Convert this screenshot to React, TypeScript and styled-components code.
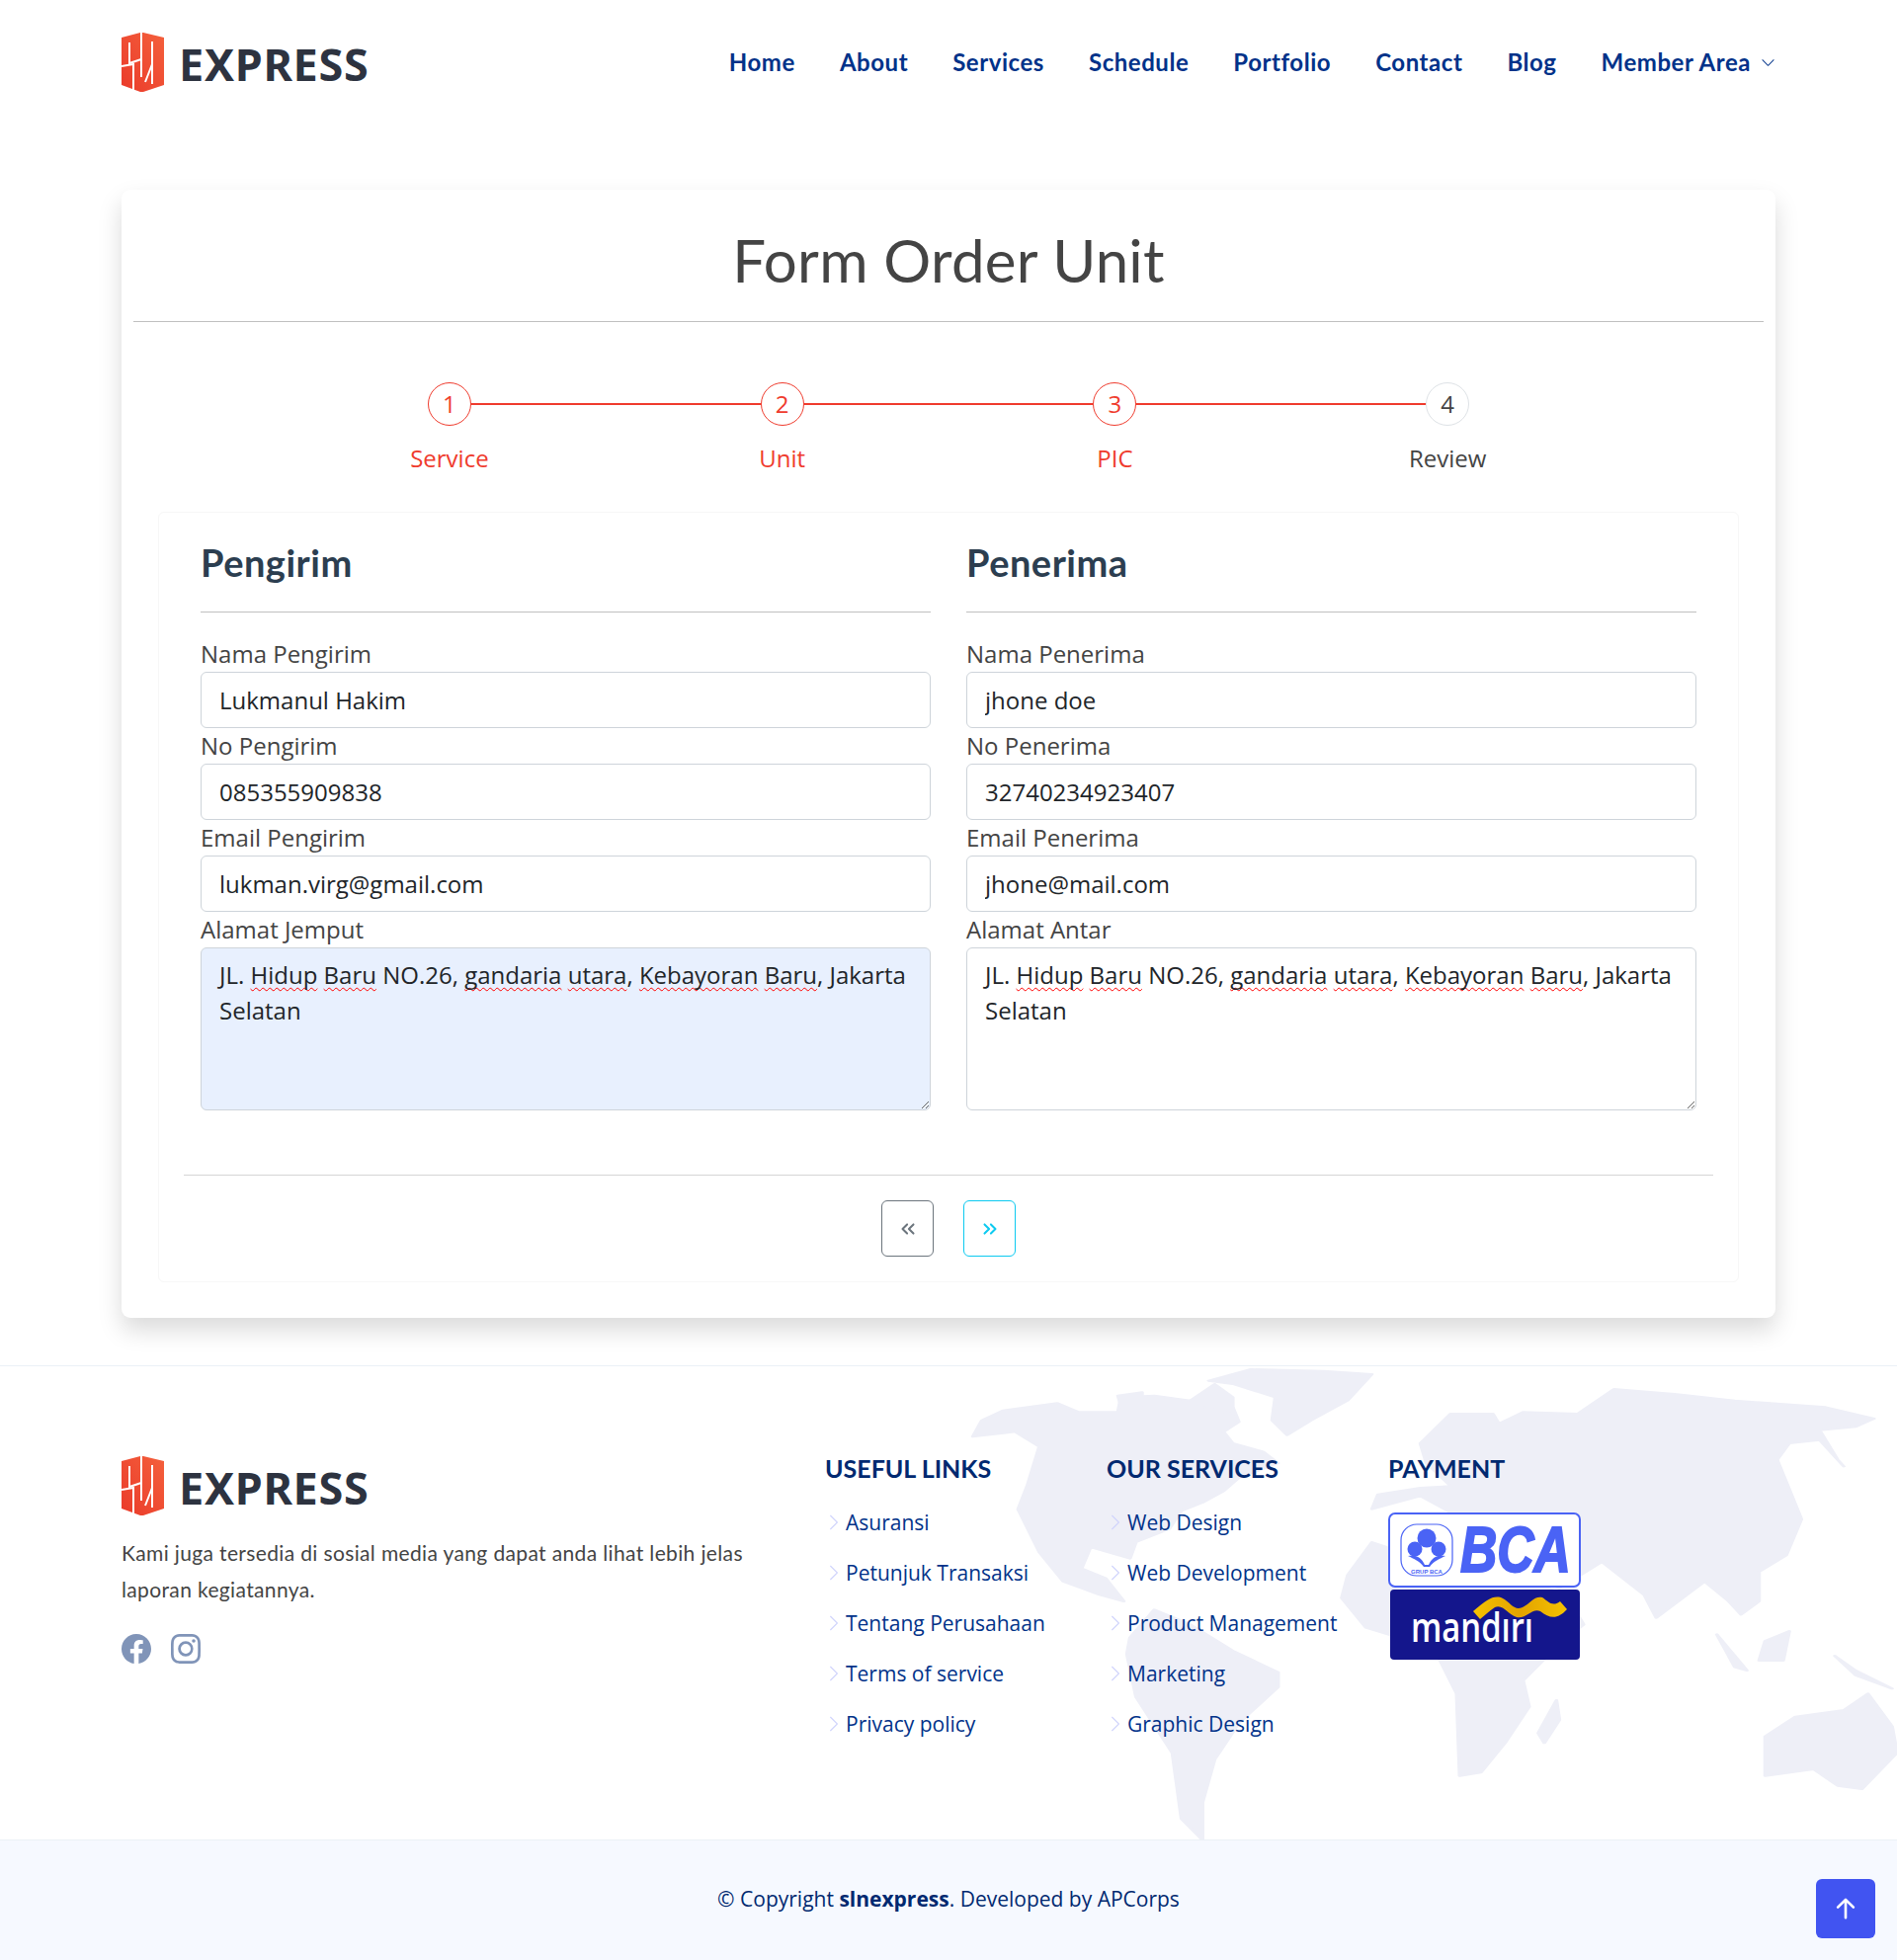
import styled, { createGlobalStyle } from "styled-components";
import { BsArrowUpShort, BsChevronDown, BsChevronRight, BsFacebook, BsInstagram } from "react-icons/bs";
import { ChevronsLeft, ChevronsRight } from "lucide-react";

const heading = `Lato, "Noto Sans", sans-serif`;
const red = "#ef3b2d";
const navy = "#012970";
const linkBlue = "#013289";

const GlobalStyle = createGlobalStyle`
  * { box-sizing: border-box; }
  body {
    margin: 0;
    background: #fff;
    color: #444;
    font-family: "Open Sans", sans-serif;
    font-size: 24px;
  }
`;

const LogoMark = () => (
  <svg width="43" height="60" viewBox="0 0 43 60">
    <defs>
      <linearGradient id="mark" x1="0" y1="1" x2="1" y2="0">
        <stop offset="0" stopColor="#ea3a2a" />
        <stop offset="1" stopColor="#f4603c" />
      </linearGradient>
    </defs>
    <polygon points="0,5 19,0 22,0 43,5 43,53 22,60 19,60 0,53" fill="url(#mark)" />
    <g fill="none" stroke="#fff" strokeWidth="2">
      <path d="M20 0V45" />
      <path d="M8 10V31L20 27" />
      <path d="M0 34L12 32V60" />
      <path d="M31 9V52M31 32L24 50" />
    </g>
  </svg>
);

const Logo = () => (
  <LogoWrap>
    <LogoMark />
    <LogoText>EXPRESS</LogoText>
  </LogoWrap>
);

const continents = [
  "40,220 55,170 90,140 180,118 215,145 280,145 285,100 340,95 400,110 440,100 470,130 480,175 455,205 470,240 520,265 545,300 480,345 455,385 420,420 385,445 365,500 310,540 300,590 235,555 220,620 260,650 290,720 250,700 190,660 150,570 115,440 130,370 150,250 110,205",
  "430,50 500,15 620,20 700,30 660,110 600,170 560,215 535,170 540,100 470,60",
  "300,830 340,745 400,790 470,870 545,935 545,980 480,1090 440,1200 420,1330 420,1445 385,1380 370,1180 310,1010 295,880",
  "700,540 660,640 650,710 690,800 780,850 810,890 840,1000 845,1250 880,1240 920,1150 960,1040 950,960 1010,850 1050,790 1020,700 930,640 800,600",
  "780,240 830,150 900,150 910,180 950,145 1040,150 1100,75 1200,90 1300,110 1450,130 1530,165 1500,190 1440,200 1470,290 1480,310 1440,230 1390,240 1370,290 1410,470 1385,580 1340,630 1340,720 1310,760 1290,720 1250,660 1170,770 1150,700 1080,600 1010,680 960,640 900,560 860,500 830,450 780,400 700,440 710,395 780,375 830,370 790,300",
  "1350,1130 1400,1070 1480,1050 1520,1000 1560,1100 1568,1180 1510,1290 1470,1280 1430,1230 1350,1250",
  "1005,1020 1010,1080 985,1150 975,1120",
  "1270,820 1320,930 1300,920",
  "1350,840 1390,810 1380,900 1340,900",
  "1465,885 1500,930 1560,985 1500,945",
  "280,95 320,85 320,125 285,125",
  "400,110 440,60 470,100 470,150 420,130",
];

const WorldMap = () => (
  <MapLayer viewBox="0 0 1568 1470" preserveAspectRatio="none">
    {continents.map((points) => (
      <polygon key={points} points={points} fill="#eeeff7" stroke="#eeeff7" strokeWidth="6" strokeLinejoin="round" />
    ))}
  </MapLayer>
);

const BcaLogo = () => (
  <svg width="195" height="76" viewBox="0 0 195 76">
    <rect x="1" y="1" width="193" height="74" rx="6" fill="#fff" stroke="#4a63f5" strokeWidth="2" />
    <rect x="13" y="12" width="52" height="52" rx="16" fill="#fff" stroke="#4a63f5" strokeWidth="1.2" />
    <g fill="#4a63f5">
      <circle cx="39" cy="26" r="9.5" />
      <circle cx="27" cy="37" r="7.5" />
      <circle cx="51" cy="37" r="7.5" />
      <path d="M20 44C28 42 34 46 37 53H41C44 46 50 42 58 44C52 47 46 49 42 55H36C32 49 26 47 20 44Z" />
    </g>
    <BcaSmall x="39" y="62" textAnchor="middle">GRUP BCA</BcaSmall>
    <BcaWord transform="translate(73 60) scale(0.806 1)">BCA</BcaWord>
  </svg>
);

const MandiriLogo = () => (
  <svg width="192" height="71" viewBox="0 0 192 71">
    <defs>
      <linearGradient id="gold" x1="0" y1="0" x2="1" y2="0">
        <stop offset="0" stopColor="#f6c200" />
        <stop offset="0.5" stopColor="#e2a300" />
        <stop offset="1" stopColor="#f6c200" />
      </linearGradient>
    </defs>
    <rect width="192" height="71" rx="4" fill="#14168c" />
    <path
      d="M84 22C98 10 104 6 112 8C122 12 124 22 134 18C142 14 146 6 154 8C160 12 164 18 172 12L179 20C170 30 162 30 152 22C144 18 138 30 128 28C120 26 114 14 106 18C100 22 96 26 91 30Z"
      fill="url(#gold)"
    />
    <MandiriWord x="21" y="53" textLength="124" lengthAdjust="spacingAndGlyphs">mandırı</MandiriWord>
  </svg>
);

const navItems = ["Home", "About", "Services", "Schedule", "Portfolio", "Contact", "Blog"];
const steps = [
  { label: "Service", done: true },
  { label: "Unit", done: true },
  { label: "PIC", done: true },
  { label: "Review", done: false },
];
const usefulLinks = ["Asuransi", "Petunjuk Transaksi", "Tentang Perusahaan", "Terms of service", "Privacy policy"];
const serviceLinks = ["Web Design", "Web Development", "Product Management", "Marketing", "Graphic Design"];

const Address = () => (
  <>
    JL. <Typo>Hidup</Typo> <Typo>Baru</Typo> NO.26, <Typo>gandaria</Typo> <Typo>utara</Typo>,{" "}
    <Typo>Kebayoran</Typo> <Typo>Baru</Typo>, Jakarta Selatan
  </>
);

type PartyProps = {
  title: string;
  who: string;
  addressLabel: string;
  name: string;
  phone: string;
  email: string;
  filled?: boolean;
};

const Party = ({ title, who, addressLabel, name, phone, email, filled }: PartyProps) => (
  <PartyColumn>
    <PartyTitle>{title}</PartyTitle>
    <Rule />
    <Label>Nama {who}</Label>
    <Input defaultValue={name} />
    <Label>No {who}</Label>
    <Input defaultValue={phone} />
    <Label>Email {who}</Label>
    <Input defaultValue={email} />
    <Label>{addressLabel}</Label>
    <AddressBox $filled={filled}>
      <Address />
    </AddressBox>
  </PartyColumn>
);

const LinkColumn = ({ title, links }: { title: string; links: string[] }) => (
  <div>
    <FooterTitle>{title}</FooterTitle>
    <LinkList>
      {links.map((link) => (
        <LinkItem key={link}>
          <BsChevronRight size={18} color="#d0d4fc" />
          <a>{link}</a>
        </LinkItem>
      ))}
    </LinkList>
  </div>
);

export default function App() {
  return (
    <>
      <GlobalStyle />
      <Header>
        <Logo />
        <Nav>
          {navItems.map((item) => (
            <NavLink key={item}>{item}</NavLink>
          ))}
          <NavLink>
            Member Area
            <BsChevronDown size={15} />
          </NavLink>
        </Nav>
      </Header>

      <Main>
        <Card>
          <PageTitle>Form Order Unit</PageTitle>
          <Rule />
          <Stepper>
            {steps.map((step, i) => (
              <Step key={step.label} $done={step.done} $last={i === steps.length - 1}>
                <StepCircle $done={step.done}>{i + 1}</StepCircle>
                <span>{step.label}</span>
              </Step>
            ))}
          </Stepper>
          <FormCard>
            <Parties>
              <Party
                title="Pengirim"
                who="Pengirim"
                addressLabel="Alamat Jemput"
                name="Lukmanul Hakim"
                phone="085355909838"
                email="lukman.virg@gmail.com"
                filled
              />
              <Party
                title="Penerima"
                who="Penerima"
                addressLabel="Alamat Antar"
                name="jhone doe"
                phone="32740234923407"
                email="jhone@mail.com"
              />
            </Parties>
            <Actions>
              <ActionButton $color="#6c757d">
                <ChevronsLeft size={22} strokeWidth={2.2} />
              </ActionButton>
              <ActionButton $color="#0dcaf0">
                <ChevronsRight size={22} strokeWidth={2.2} />
              </ActionButton>
            </Actions>
          </FormCard>
        </Card>
      </Main>

      <Footer>
        <FooterTop>
          <WorldMap />
          <FooterGrid>
            <FooterBrand>
              <Logo />
              <FooterText>
                Kami juga tersedia di sosial media yang dapat anda lihat lebih jelas laporan kegiatannya.
              </FooterText>
              <Socials>
                <BsFacebook size={30} />
                <BsInstagram size={30} />
              </Socials>
            </FooterBrand>
            <LinkColumn title="USEFUL LINKS" links={usefulLinks} />
            <LinkColumn title="OUR SERVICES" links={serviceLinks} />
            <div>
              <FooterTitle>PAYMENT</FooterTitle>
              <Payments>
                <BcaLogo />
                <MandiriLogo />
              </Payments>
            </div>
          </FooterGrid>
        </FooterTop>
        <FooterBottom>
          <span>
            © Copyright <strong>slnexpress</strong>. Developed by APCorps
          </span>
          <BackToTop>
            <BsArrowUpShort size={42} />
          </BackToTop>
        </FooterBottom>
      </Footer>
    </>
  );
}

const LogoWrap = styled.div`
  display: flex;
  align-items: center;
  gap: 15px;
  height: 60px;
`;

const LogoText = styled.span`
  font-family: "Noto Sans", sans-serif;
  font-weight: 700;
  font-size: 45px;
  line-height: 60px;
  letter-spacing: 0.7px;
  margin-top: 4px;
  color: #2d3340;
`;

const Header = styled.header`
  height: 126px;
  padding: 33px 123px 0;
  display: flex;
  justify-content: space-between;
  align-items: flex-start;
`;

const Nav = styled.nav`
  display: flex;
  gap: 45px;
  padding-top: 12px;
`;

const NavLink = styled.a`
  display: flex;
  align-items: center;
  gap: 10px;
  font-family: ${heading};
  font-weight: 700;
  font-size: 24px;
  letter-spacing: 0.55px;
  line-height: 36px;
  color: ${linkBlue};
`;

const Main = styled.main`
  padding: 66px 123px 48px;
`;

const Card = styled.section`
  background: #fff;
  border-radius: 9px;
  box-shadow: 0 12px 24px rgba(0, 0, 0, 0.15);
  padding: 36px 12px 36px;
`;

const PageTitle = styled.h1`
  margin: 0 0 27px;
  font-family: ${heading};
  font-weight: 400;
  font-size: 60px;
  letter-spacing: 0.25px;
  line-height: 70px;
  text-align: center;
  color: #444;
`;

const Rule = styled.hr`
  margin: 0;
  border: 0;
  border-top: 1.5px solid #c0c0c0;
`;

const Stepper = styled.ol`
  list-style: none;
  display: grid;
  grid-template-columns: repeat(4, 336.75px);
  justify-content: center;
  margin: 61px 0 38px;
  padding: 0;
`;

const Step = styled.li<{ $done: boolean; $last: boolean }>`
  position: relative;
  display: flex;
  flex-direction: column;
  align-items: center;
  gap: 17px;
  line-height: 32px;
  color: ${(p) => (p.$done ? red : "#444")};

  &::after {
    content: "";
    display: ${(p) => (p.$last ? "none" : "block")};
    position: absolute;
    top: 21px;
    left: calc(50% + 22px);
    width: calc(100% - 44px);
    height: 2px;
    background: ${red};
  }
`;

const StepCircle = styled.div<{ $done: boolean }>`
  width: 44px;
  height: 44px;
  border-radius: 50%;
  display: flex;
  align-items: center;
  justify-content: center;
  border: 1.5px solid ${(p) => (p.$done ? red : "#dee2e6")};
`;

const FormCard = styled.div`
  margin: 0 25px;
  border: 1.5px solid #f7f7f7;
  border-radius: 6px;
  padding: 29px 0 25px;
`;

const Parties = styled.div`
  display: grid;
  grid-template-columns: 739px 739px;
  gap: 36px;
  justify-content: center;
`;

const PartyColumn = styled.div`
  display: flex;
  flex-direction: column;
`;

const PartyTitle = styled.h2`
  margin: 0 0 28px;
  font-family: ${heading};
  font-weight: 700;
  font-size: 38px;
  letter-spacing: 0.5px;
  line-height: 43px;
  color: #2c3e50;
`;

const Label = styled.label`
  line-height: 36px;
  color: #444;

  ${Rule} + & {
    margin-top: 24px;
  }
`;

const Input = styled.input`
  height: 57px;
  padding: 9px 18px;
  border: 1.5px solid #ced4da;
  border-radius: 6px;
  font: inherit;
  color: #212529;
  background: #fff;
  outline: none;
`;

const AddressBox = styled.div<{ $filled?: boolean }>`
  height: 165px;
  padding: 9px 18px;
  border: 1.5px solid #ced4da;
  border-radius: 6px;
  line-height: 36px;
  color: #212529;
  background: ${(p) => (p.$filled ? "#e8f0fe" : "#fff")};
  overflow: auto;
  resize: vertical;
`;

const Typo = styled.span`
  text-decoration: underline wavy #f00 1px;
  text-decoration-skip-ink: none;
  text-underline-offset: 3px;
`;

const Actions = styled.div`
  margin: 65px 25px 0;
  padding-top: 25px;
  border-top: 1.5px solid #d6d6d6;
  display: flex;
  justify-content: center;
  gap: 30px;
`;

const ActionButton = styled.button<{ $color: string }>`
  width: 53px;
  height: 57px;
  padding: 0;
  display: flex;
  align-items: center;
  justify-content: center;
  background: transparent;
  border: 1.5px solid ${(p) => p.$color};
  border-radius: 6px;
  color: ${(p) => p.$color};
`;

const Footer = styled.footer`
  position: relative;
`;

const FooterTop = styled.div`
  position: relative;
  height: 480px;
  overflow: hidden;
  border-top: 1.5px solid #ebf1f6;
`;

const MapLayer = styled.svg`
  position: absolute;
  top: -2px;
  right: 0;
  width: 960px;
  height: 490px;
`;

const FooterGrid = styled.div`
  position: relative;
  display: grid;
  grid-template-columns: 712px 285px 285px 1fr;
  padding: 89px 123px 0;
`;

const FooterBrand = styled.div`
  padding-top: 2px;
`;

const FooterText = styled.p`
  width: 660px;
  margin: 20px 0 0;
  font-family: ${heading};
  font-size: 21px;
  letter-spacing: 0.36px;
  line-height: 36.75px;
  color: #444;
`;

const Socials = styled.div`
  display: flex;
  gap: 20px;
  margin-top: 26px;
  color: #8094b8;
`;

const FooterTitle = styled.h4`
  margin: 0;
  font-family: ${heading};
  font-weight: 700;
  font-size: 25px;
  line-height: 29px;
  color: ${navy};
`;

const LinkList = styled.ul`
  list-style: none;
  margin: 14px 0 0;
  padding: 0;
`;

const LinkItem = styled.li`
  display: flex;
  align-items: center;
  gap: 3px;
  height: 51px;
  font-size: 21px;
  color: ${linkBlue};
`;

const Payments = styled.div`
  display: flex;
  flex-direction: column;
  align-items: flex-start;
  gap: 2px;
  margin-top: 30px;

  svg:last-child {
    margin-left: 2px;
  }
`;

const BcaSmall = styled.text`
  font-family: "Liberation Sans", sans-serif;
  font-weight: 700;
  font-size: 6px;
  fill: #4a63f5;
`;

const BcaWord = styled.text`
  font-family: "Liberation Sans", sans-serif;
  font-weight: 700;
  font-style: italic;
  font-size: 64px;
  fill: #4a63f5;
  stroke: #4a63f5;
  stroke-width: 2px;
`;

const MandiriWord = styled.text`
  font-family: "Open Sans", sans-serif;
  font-weight: 600;
  font-size: 42px;
  fill: #fff;
`;

const FooterBottom = styled.div`
  height: 122px;
  display: flex;
  align-items: center;
  justify-content: center;
  padding-bottom: 4px;
  background: #f6f9ff;
  border-top: 1.5px solid #ebf1f6;
  font-size: 21px;
  color: ${navy};
`;

const BackToTop = styled.button`
  position: absolute;
  right: 22px;
  bottom: 22px;
  width: 60px;
  height: 60px;
  padding: 0;
  display: flex;
  align-items: center;
  justify-content: center;
  border: 0;
  border-radius: 6px;
  background: #4154f1;
  color: #fff;
`;
